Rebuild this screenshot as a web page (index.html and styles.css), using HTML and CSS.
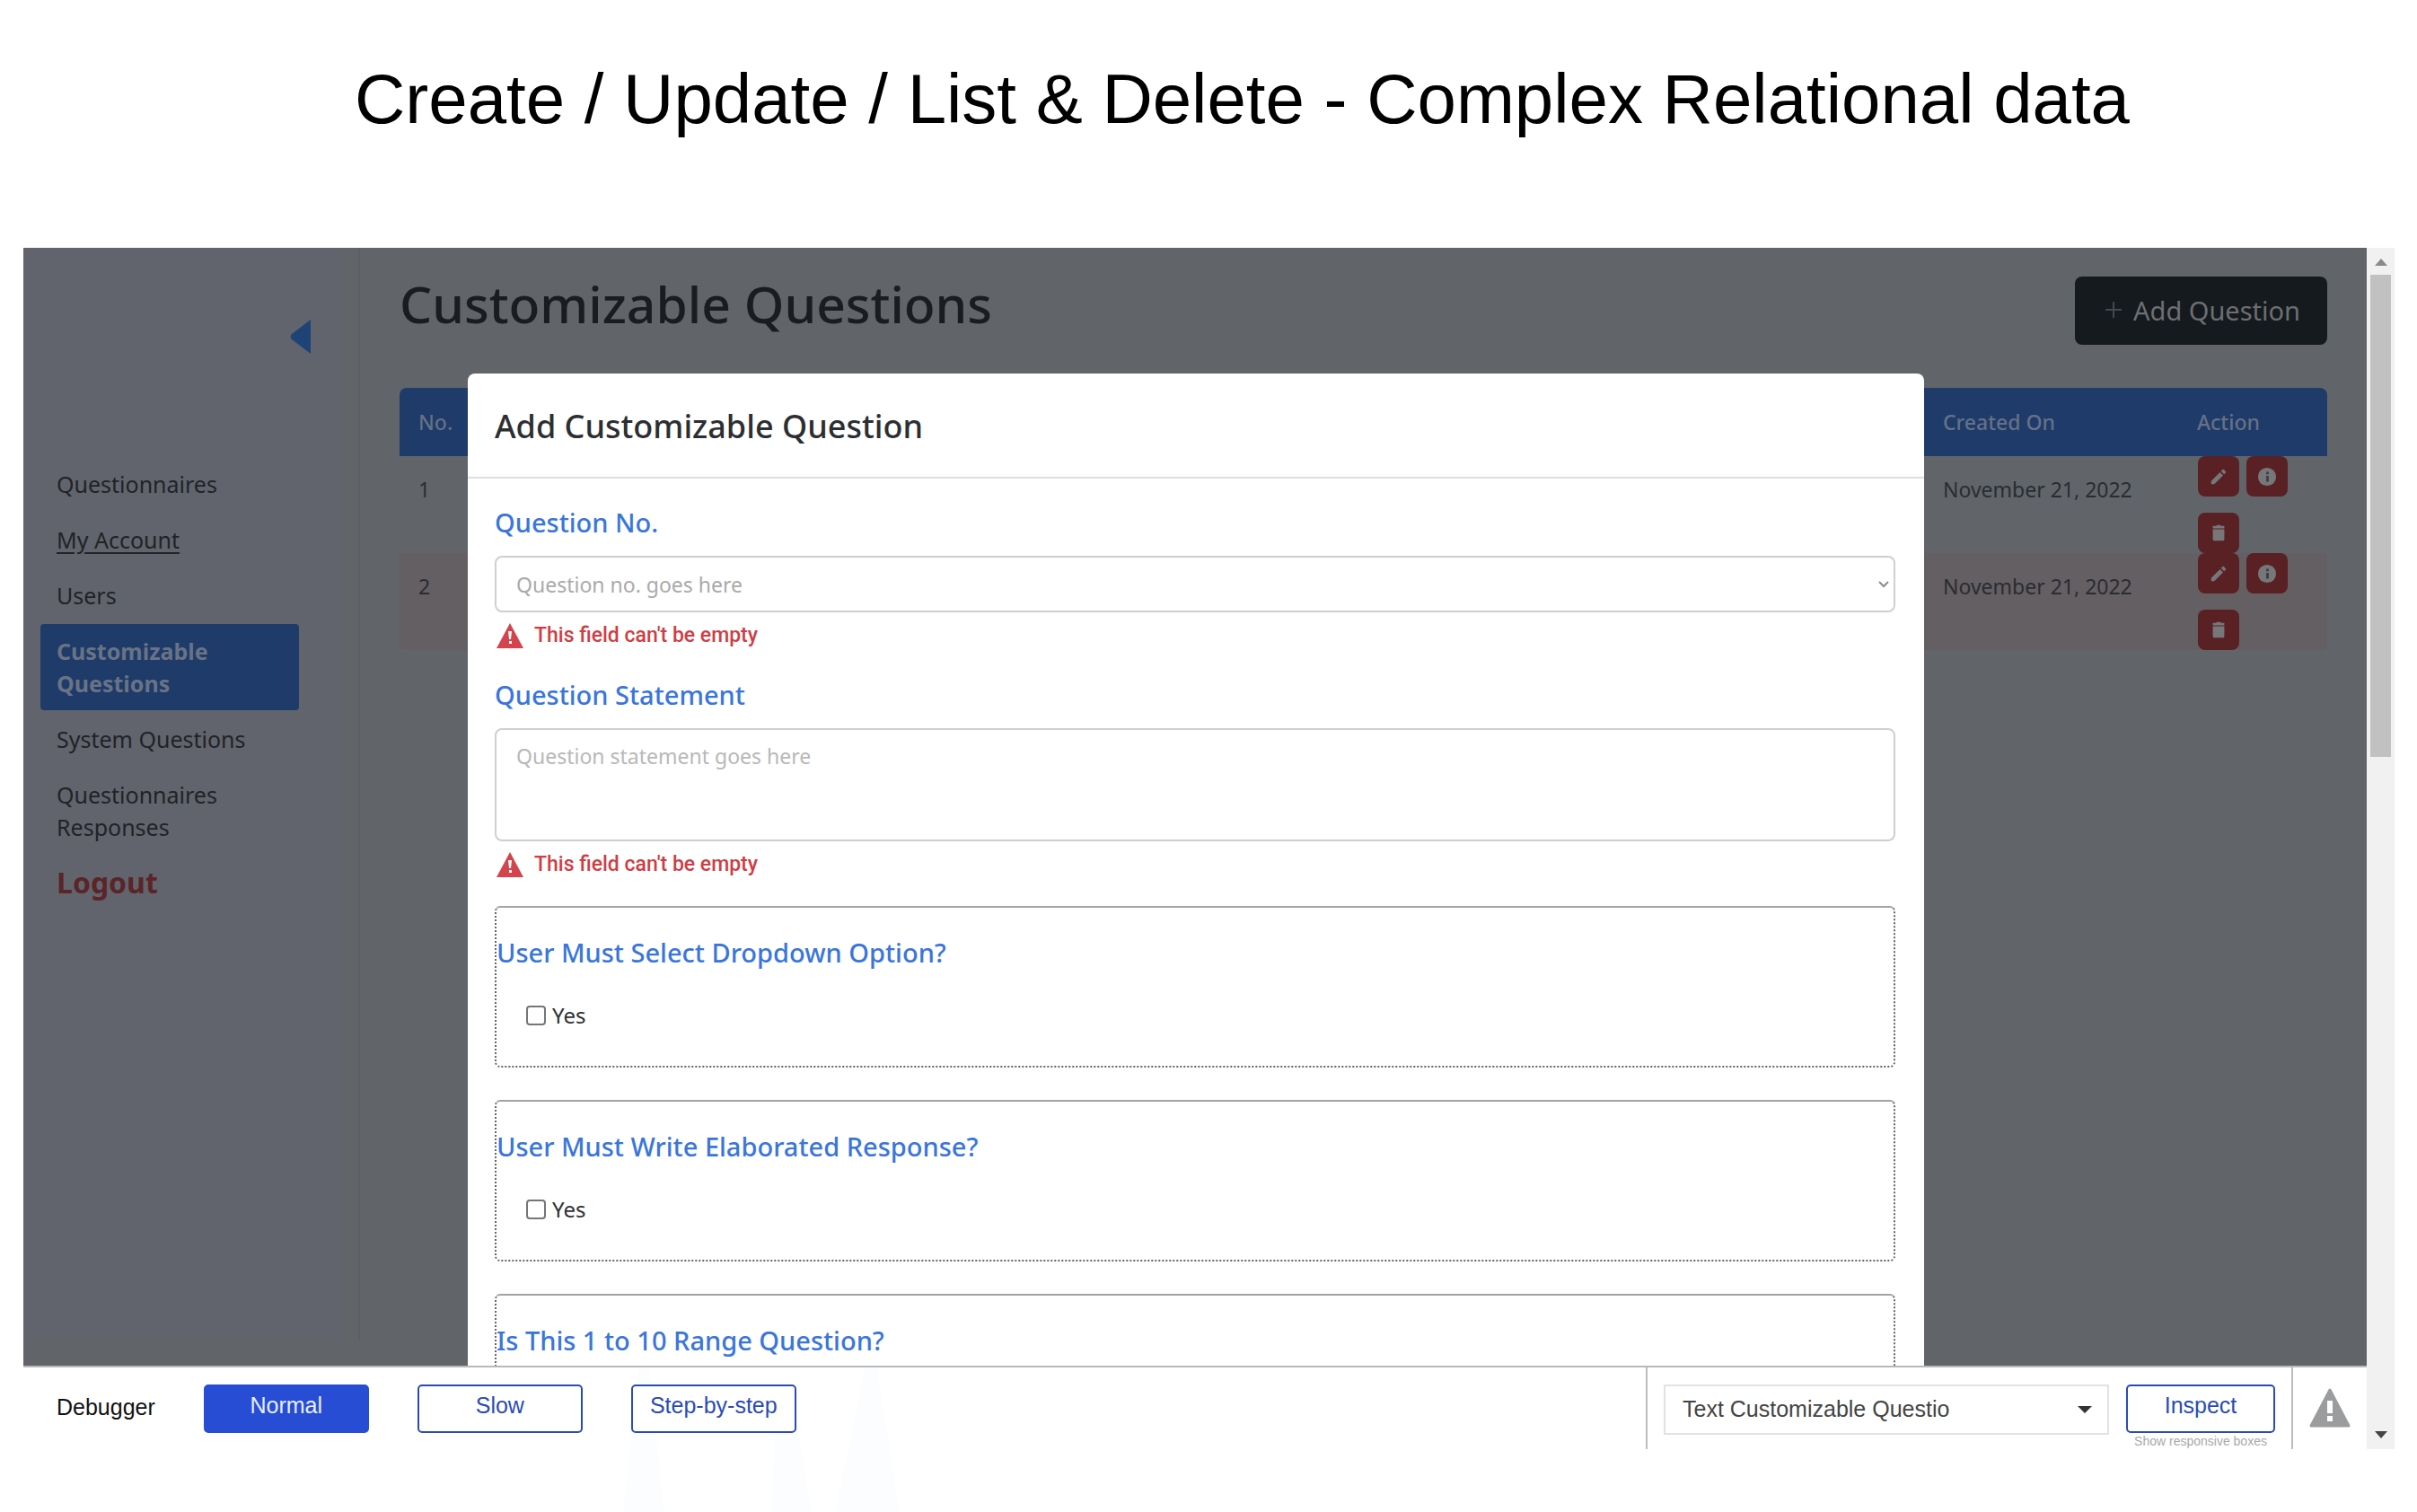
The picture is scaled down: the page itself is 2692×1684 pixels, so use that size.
FILE: index.html
```html
<!DOCTYPE html>
<html lang="en">
<head>
<meta charset="utf-8">
<title>Customizable Questions</title>
<link rel="stylesheet" href="styles.css">
</head>
<body>
<svg class="backdrop" viewBox="0 0 320 164" aria-hidden="true">
  <path d="M0 164 18 0 28 0 46 164zM164 164 172 40 190 40 210 164zM236 164 270 0 282 0 308 164z" fill="#fbfdff"/>
</svg>
<h1 class="slide-title">Create / Update / List &amp; Delete - Complex Relational data</h1>

<div class="frame">
  <div class="screen">
    <div class="app">
      <aside class="sidebar">
        <button class="collapse" type="button" aria-label="Collapse menu">
          <svg viewBox="0 0 24 38"><path d="M24 0V38L3 22Q0 19 3 16z" fill="#1f4377"/></svg>
        </button>
        <nav class="menu">
          <a href="#">Questionnaires</a>
          <a href="#" class="hovered">My Account</a>
          <a href="#">Users</a>
          <a href="#" class="active">Customizable Questions</a>
          <a href="#">System Questions</a>
          <a href="#">Questionnaires Responses</a>
          <a href="#" class="logout">Logout</a>
        </nav>
      </aside>

      <main class="main">
        <header class="page-head">
          <h2>Customizable Questions</h2>
          <button class="add" type="button">
            <svg viewBox="0 0 20 20"><path d="M10 1V19M1 10H19" stroke="#43474f" stroke-width="2"/></svg>
            Add Question
          </button>
        </header>
        <div class="table-wrap">
          <table>
            <colgroup><col class="c-no"><col><col class="c-date"><col class="c-action"></colgroup>
            <thead><tr><th scope="col">No.</th><td></td><th scope="col">Created On</th><th scope="col">Action</th></tr></thead>
            <tbody>
              <tr>
                <td>1</td><td></td><td>November 21, 2022</td>
                <td class="action-cell"><div class="actions">
                  <button type="button" aria-label="Edit"><svg viewBox="0 0 24 24"><path d="M3 17.200V21h3.800L17.500 10.300l-3.800-3.800zM20.700 7a1 1 0 0 0 0-1.400l-2.300-2.300a1 1 0 0 0-1.400 0l-2 2 3.800 3.800z"/></svg></button>
                  <button type="button" aria-label="Details"><svg viewBox="0 0 24 24"><circle cx="12" cy="12" r="11"/><path class="cut" d="M11 6h3v3h-3zM11 11h3v7h-3z"/></svg></button>
                  <button type="button" aria-label="Delete"><svg viewBox="0 0 24 24"><path d="M5 3h4l1-1h4l1 1h4v3H5zM5 7h14v12q0 2-2 2H7q-2 0-2-2z"/></svg></button>
                </div></td>
              </tr>
              <tr>
                <td>2</td><td></td><td>November 21, 2022</td>
                <td class="action-cell"><div class="actions">
                  <button type="button" aria-label="Edit"><svg viewBox="0 0 24 24"><path d="M3 17.200V21h3.800L17.500 10.300l-3.800-3.800zM20.700 7a1 1 0 0 0 0-1.400l-2.300-2.300a1 1 0 0 0-1.400 0l-2 2 3.800 3.800z"/></svg></button>
                  <button type="button" aria-label="Details"><svg viewBox="0 0 24 24"><circle cx="12" cy="12" r="11"/><path class="cut" d="M11 6h3v3h-3zM11 11h3v7h-3z"/></svg></button>
                  <button type="button" aria-label="Delete"><svg viewBox="0 0 24 24"><path d="M5 3h4l1-1h4l1 1h4v3H5zM5 7h14v12q0 2-2 2H7q-2 0-2-2z"/></svg></button>
                </div></td>
              </tr>
            </tbody>
          </table>
        </div>
      </main>

      <div class="overlay">
        <section class="modal" role="dialog" aria-labelledby="modal-title">
          <h3 class="modal-title" id="modal-title">Add Customizable Question</h3>
          <form class="modal-body">
            <div class="field">
              <label for="qno">Question No.</label>
              <div class="select-box">
                <select id="qno"><option>Question no. goes here</option></select>
                <svg viewBox="0 0 12 8"><path d="M1 1 6 6 11 1" fill="none" stroke="#8c8c8c" stroke-width="2"/></svg>
              </div>
              <p class="error"><svg viewBox="0 0 30 28"><path d="M15 0 30 28H0z" fill="#d3444c"/><path d="M13 9h4l-1 9h-2zM14 20h3v3h-3z" fill="#fff"/></svg>This field can't be empty</p>
            </div>
            <div class="field">
              <label for="qtext">Question Statement</label>
              <textarea id="qtext" placeholder="Question statement goes here"></textarea>
              <p class="error"><svg viewBox="0 0 30 28"><path d="M15 0 30 28H0z" fill="#d3444c"/><path d="M13 9h4l-1 9h-2zM14 20h3v3h-3z" fill="#fff"/></svg>This field can't be empty</p>
            </div>
            <div class="option-box">
              <h4>User Must Select Dropdown Option?</h4>
              <label><input type="checkbox">Yes</label>
            </div>
            <div class="option-box">
              <h4>User Must Write Elaborated Response?</h4>
              <label><input type="checkbox">Yes</label>
            </div>
            <div class="option-box">
              <h4>Is This 1 to 10 Range Question?</h4>
            </div>
          </form>
        </section>
      </div>
    </div>

    <footer class="debugger">
      <span class="debug-name">Debugger</span>
      <div class="speeds">
        <button type="button" class="selected">Normal</button>
        <button type="button">Slow</button>
        <button type="button">Step-by-step</button>
      </div>
      <div class="inspector">
        <div class="select-box">
          <select aria-label="Element"><option>Text Customizable Questio</option></select>
          <svg viewBox="0 0 16 8"><path d="M0 0H16L8 8z" fill="#333"/></svg>
        </div>
        <div class="inspect">
          <button type="button">Inspect</button>
          <a href="#">Show responsive boxes</a>
        </div>
      </div>
      <div class="issues">
        <svg viewBox="0 0 46 44" role="img" aria-label="Issues"><path d="M23 2 44 42H2z" fill="#9a9c9e" stroke="#9a9c9e" stroke-width="3" stroke-linejoin="round"/><path d="M20 14h6v14h-6zM20 31h6v6h-6z" fill="#fff"/></svg>
      </div>
    </footer>
  </div>

  <div class="scrollbar" aria-hidden="true">
    <svg viewBox="0 0 14 8"><path d="M7 0 14 8H0z" fill="#8a8a8a"/></svg>
    <div class="track"><div class="thumb"></div></div>
    <svg viewBox="0 0 14 8"><path d="M0 0H14L7 8z" fill="#444"/></svg>
  </div>
</div>
</body>
</html>
```
FILE: styles.css
```css
* { box-sizing: border-box; margin: 0; padding: 0; }

:root {
  --ui: "Noto Sans", "Open Sans", sans-serif;
  --sys: "Liberation Sans", Arial, sans-serif;
  --dim-main: #616569;
  --dim-side: #61646d;
  --dim-blue: #1e3b69;
  --blue: #3a76da;
  --debug-blue: #2a4bb4;
}

body {
  position: relative;
  display: flex;
  flex-direction: column;
  height: 100vh;
  padding: 0 25px 70px 26px;
  background: #fff;
  font-family: var(--ui);
  overflow: hidden;
}

button, select, textarea { font: inherit; }

.backdrop {
  position: absolute;
  left: 694px;
  bottom: 0;
  z-index: -1;
  width: 320px;
  height: 164px;
}

.slide-title {
  padding: 63px 0 119px 74px;
  font: 400 78px/94px var(--sys);
  text-align: center;
  color: #000;
}

.frame { flex: 1; display: flex; min-height: 0; }
.screen { flex: 1; display: flex; flex-direction: column; min-width: 0; }

.app {
  position: relative;
  flex: 1;
  display: flex;
  min-height: 0;
  background: var(--dim-main);
  overflow: hidden;
}

/* Sidebar */
.sidebar {
  width: 375px;
  margin-bottom: 28px;
  padding: 80px 54px 0 19px;
  border-right: 2px solid #5c6064;
  background: linear-gradient(to right, var(--dim-side) 345px, var(--dim-main) 365px);
}
.collapse {
  display: block;
  width: 24px;
  height: 38px;
  margin: 0 0 115px 277px;
  border: 0;
  background: none;
}
.collapse svg { display: block; }
.menu { display: flex; flex-direction: column; gap: 2px; width: 288px; }
.menu a {
  padding: 12px 18px;
  border-radius: 4px;
  font-size: 25px;
  line-height: 36px;
  color: #202327;
  text-decoration: none;
}
.menu .hovered { text-decoration: underline; text-underline-offset: 4px; }
.menu .active { background: var(--dim-blue); color: #697385; font-weight: 700; }
.menu .logout { font-size: 32px; font-weight: 700; color: #5a2428; }

/* Page */
.main { flex: 1; padding: 32px 44px 0; }
.page-head {
  display: flex;
  justify-content: space-between;
  align-items: center;
  margin-bottom: 48px;
}
.page-head h2 { padding-bottom: 16px; font-size: 57px; line-height: 60px; font-weight: 500; color: #191c20; }
.add {
  display: flex;
  align-items: center;
  gap: 12px;
  height: 76px;
  padding: 0 30px 2px 33px;
  border: 0;
  border-radius: 8px;
  background: #151a1e;
  color: #6d6f73;
  font-size: 29px;
}
.add svg { width: 20px; height: 20px; }

.table-wrap { border-radius: 8px 8px 4px 4px; overflow: hidden; }
table { width: 100%; table-layout: fixed; border-collapse: collapse; font-size: 23px; line-height: 36px; color: #292d31; }
.c-no { width: 98px; }
.c-date { width: 283px; }
.c-action { width: 166px; }
thead { background: var(--dim-blue); }
thead tr { height: 76px; }
th { padding: 0 21px; text-align: left; font-weight: 500; color: #657186; }
tbody tr:nth-child(even) { background: #645f62; }
tbody td { padding: 19px 21px; vertical-align: top; }
tbody .action-cell { padding: 0 22px; }
.actions { display: flex; flex-wrap: wrap; gap: 18px 8px; }
.actions button {
  display: grid;
  place-items: center;
  width: 46px;
  height: 45px;
  border: 0;
  border-radius: 8px;
  background: #592124;
}
.actions svg { width: 22px; height: 22px; fill: #77777a; }
.actions .cut { fill: #3b3d40; }

/* Modal */
.overlay { position: absolute; inset: 0; padding: 140px 0 0 2px; }
.modal {
  width: 80%;
  max-width: 1622px;
  margin: 0 auto;
  border-radius: 8px;
  background: #fff;
}
.modal-title {
  padding: 34px 30px 31px;
  border-bottom: 2px solid #dfdfdf;
  font-size: 36px;
  line-height: 50px;
  font-weight: 500;
  color: #2c2f32;
}
.modal-body { padding: 29px 32px 40px 30px; }
.field { margin-bottom: 32px; }
.field > label {
  display: block;
  margin-bottom: 17px;
  font-size: 29px;
  line-height: 40px;
  font-weight: 500;
  color: var(--blue);
}
.select-box { display: grid; align-items: center; }
.select-box select, .select-box svg { grid-area: 1 / 1; }
.select-box select { width: 100%; appearance: none; background: transparent; }
.select-box svg { justify-self: end; pointer-events: none; }
.field select, .field textarea {
  display: block;
  width: 100%;
  height: 63px;
  padding: 0 22px;
  border: 2px solid #cfcfcf;
  border-radius: 8px;
  font-size: 23px;
  line-height: 36px;
  color: #aaa;
}
.field .select-box svg { width: 12px; height: 8px; margin-right: 7px; }
.field textarea { height: 126px; padding: 11px 22px; resize: none; }
.field textarea::placeholder { color: #b8b8b8; }
.error {
  display: flex;
  align-items: center;
  gap: 12px;
  height: 28px;
  margin: 12px 0 0 2px;
  font: 500 23px/28px Roboto, sans-serif;
  color: #cf3d45;
}
.error svg { width: 30px; height: 28px; }

.option-box {
  height: 180px;
  margin-bottom: 36px;
  padding-top: 30px;
  border: 2px dotted #666;
  border-top: 2px solid #a3a3a3;
  border-radius: 6px;
}
.option-box h4 { font-size: 29px; line-height: 40px; font-weight: 500; color: var(--blue); }
.option-box label {
  display: flex;
  align-items: center;
  gap: 7px;
  margin: 33px 0 0 33px;
  font-size: 24px;
  line-height: 34px;
  color: #303234;
}
.option-box input {
  appearance: none;
  width: 22px;
  height: 22px;
  border: 2px solid #767676;
  border-radius: 4px;
  background: #fff;
}

/* Debugger bar */
.debugger {
  display: flex;
  height: 93px;
  padding-left: 37px;
  border-top: 2px solid #b9b9b9;
  font: 400 25px/30px var(--sys);
  overflow: hidden;
}
.debug-name { padding: 29px 54px 0 0; color: #111; }
.speeds { display: flex; gap: 54px; padding-top: 19px; }
.debugger button {
  width: 184px;
  height: 54px;
  padding-bottom: 8px;
  border: 2px solid var(--debug-blue);
  border-radius: 5px;
  background: #fff;
  color: var(--debug-blue);
}
.debugger .selected { background: #264dd4; border-color: #264dd4; color: #e8edff; }
.inspector {
  display: flex;
  gap: 19px;
  margin-left: auto;
  padding: 19px 18px 0 18px;
  border-left: 2px solid #bdbdbd;
}
.inspector .select-box { width: 496px; height: 56px; }
.inspector select { height: 56px; padding: 0 19px 2px; border: 2px solid #e2e2e2; color: #444; }
.inspector .select-box svg { width: 16px; height: 8px; margin-right: 19px; }
.inspect { display: flex; flex-direction: column; align-items: center; }
.inspect button { width: 166px; }
.inspect a { font-size: 14px; line-height: 18px; color: #a9a9a9; text-decoration: none; }
.issues { padding: 23px 18px 0; border-left: 2px solid #bdbdbd; }
.issues svg { display: block; width: 46px; height: 44px; }

/* Scrollbar */
.scrollbar {
  display: flex;
  flex-direction: column;
  align-items: center;
  width: 31px;
  padding: 12px 0;
  background: #f1f1f1;
}
.scrollbar svg { width: 14px; height: 8px; }
.track { flex: 1; width: 23px; padding: 10px 0; }
.thumb { height: 42%; background: #c1c1c1; }
```
